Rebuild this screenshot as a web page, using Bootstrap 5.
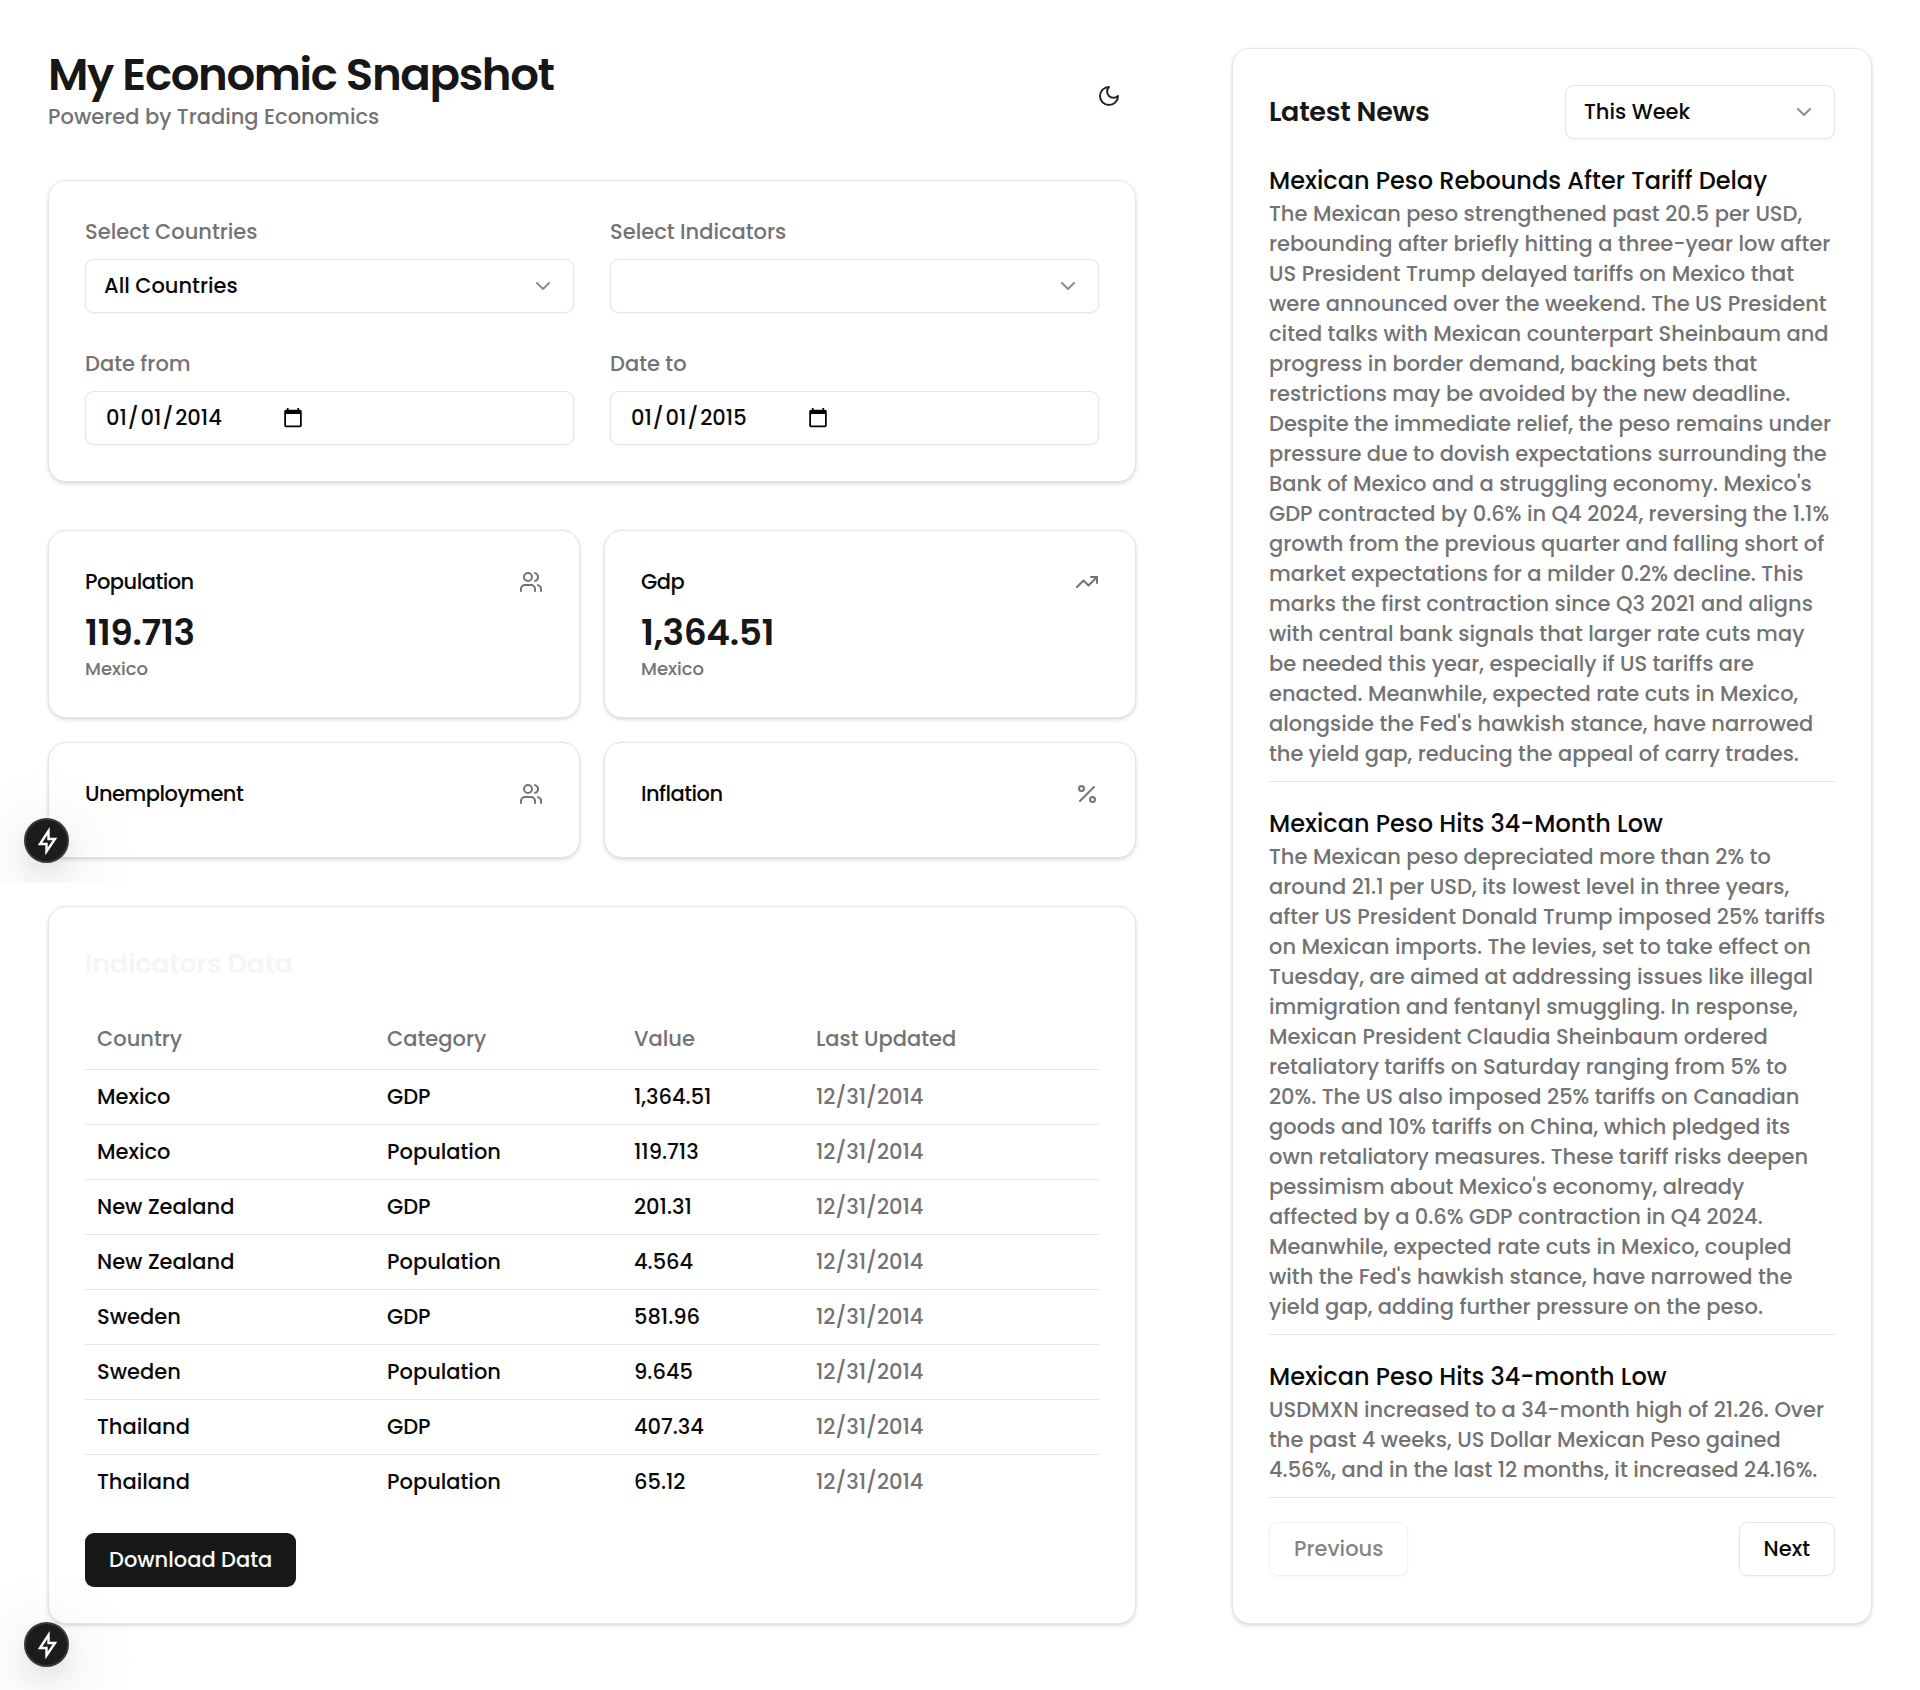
<!DOCTYPE html>
<html lang="en">
<head>
<meta charset="utf-8">
<meta name="viewport" content="width=device-width, initial-scale=1">
<title>My Economic Snapshot</title>
<link href="https://cdn.jsdelivr.net/npm/bootstrap@5.3.0/dist/css/bootstrap.min.css" rel="stylesheet">
<style>
  :root { --line: #e5e5e5; --muted: #737373; --ink: #171717; }
  body { font-family: Poppins, Inter, "Liberation Sans", sans-serif; font-size: 21px; line-height: 30px; font-weight: 500; color: #0a0a0a; background: #fff; }
  h1, h2, h3, p { margin: 0; }
  .page-pad { padding: 48px; }
  .news-col { flex: 0 0 auto; width: calc(33.333vw + 96px); }
  .page-title { font-size: 45px; line-height: 54px; font-weight: 600; color: var(--ink); letter-spacing: -.03em; }
  .page-head { margin-bottom: 36px; }
  .page-head > div { padding-bottom: 12px; }
  .soft { color: var(--muted); }
  .panel { --bs-card-border-color: var(--line); --bs-card-border-radius: 18px;
    --bs-card-color: #0a0a0a; box-shadow: 0 2px 4px rgba(0,0,0,.1), 0 1px 3px rgba(0,0,0,.06); padding: 36px; }
  .fields { display: grid; grid-template-columns: 1fr 1fr; gap: 36px; }
  .fields label { display: block; margin-bottom: 12px; color: var(--muted); }
  .field { height: 54px; padding: 0 18px; font-size: 21px; line-height: 30px; font-weight: 500; border-color: var(--line); border-radius: 9px; color: #0a0a0a; box-shadow: 0 1px 3px rgba(0,0,0,.05); }
  select.field { background-image: none; }
  .picker { position: relative; }
  .picker svg { position: absolute; right: 19px; top: 15px; pointer-events: none; opacity: .8; }
  .news-pick { width: 270px; }
  input.field { display: flex; align-items: center; padding: 0 20px; }
  input.field::-webkit-datetime-edit { flex: none; width: 166px; padding: 0; }
  input.field::-webkit-datetime-edit-text { padding: 0 2px 0 1px; }
  input.field::-webkit-calendar-picker-indicator { margin: 0; padding: 0; width: 22px; height: 22px; }
  .stats { display: grid; grid-template-columns: 1fr 1fr; gap: 24px; }
  .stat-name { font-size: 21px; line-height: 30px; font-weight: 500; letter-spacing: -.025em; }
  .stat-top { margin-bottom: 12px; }
  .stat-num { font-size: 36px; line-height: 48px; font-weight: 600; color: var(--ink); letter-spacing: -.01em; }
  .stat-place { font-size: 18px; line-height: 24px; color: var(--muted); }
  .section-title { font-size: 27px; line-height: 42px; font-weight: 600; letter-spacing: -.01em; color: var(--ink); }
  .ghost { color: #f5f5f5; }
  .stack { display: flex; flex-direction: column; gap: 48px; }
  .data-table { --bs-table-color: #0a0a0a; --bs-table-bg: transparent; margin: 24px 0; border-color: var(--line); table-layout: fixed; }
  .data-table th, .data-table td { padding: 12px; font-weight: 500; }
  .data-table th { padding: 15px 12px; color: var(--muted); }
  .data-table td:last-child { color: var(--muted); }
  .data-table tbody tr:last-child td { border-bottom: 0; }
  .col-country { width: 290px; }
  .col-category { width: 247px; }
  .col-value { width: 182px; }
  .act { height: 54px; padding: 0 24px; font-size: 21px; line-height: 30px; font-weight: 500; border-radius: 9px; box-shadow: 0 1px 3px rgba(0,0,0,.05);
    --bs-btn-color: #0a0a0a; --bs-btn-border-color: var(--line); --bs-btn-bg: #fff; --bs-btn-disabled-color: #0a0a0a; --bs-btn-disabled-border-color: var(--line); --bs-btn-disabled-opacity: .5; }
  .act-dark { --bs-btn-color: #fafafa; --bs-btn-bg: #171717; border: 0; }
  .icon-btn { width: 54px; height: 54px; padding: 0; display: flex; align-items: center; justify-content: center; }
  .story { padding-bottom: 12px; border-bottom: 1px solid var(--line); margin-bottom: 24px; }
  .story-title { font-size: 24px; line-height: 36px; font-weight: 500; }
  .story p { color: var(--muted); white-space: nowrap; }
  .glyph { fill: none; stroke: currentColor; stroke-width: 2; stroke-linecap: round; stroke-linejoin: round; display: block; }
  .dev-layer { position: absolute; left: 0; width: 240px; height: 240px; overflow: hidden; pointer-events: none; }
  .dev-layer.upper { top: 643px; }
  .dev-layer.lower { bottom: 0; }
  .dev-btn { position: absolute; left: 24px; bottom: 20px; width: 45px; height: 45px; border: 2px solid #3a3a3c; border-radius: 50%; background: #1c1c1e; color: #fff; padding: 0;
    display: flex; align-items: center; justify-content: center; box-shadow: 0 12px 24px rgba(0,0,0,.08), 0 16px 80px rgba(0,0,0,.2); }
  .dev-btn .glyph { stroke-width: 2.4; stroke-linejoin: miter; }
  .lower .dev-btn { bottom: 23px; }
</style>
</head>
<body class="position-relative min-vh-100">
<main class="d-flex">
  <div class="page-pad flex-grow-1">
    <header class="page-head d-flex justify-content-between align-items-center">
      <div>
        <h1 class="page-title">My Economic Snapshot</h1>
        <p class="soft">Powered by Trading Economics</p>
      </div>
      <button type="button" class="btn icon-btn border-0" aria-label="Toggle theme">
        <svg class="glyph" width="24" height="24" viewBox="0 0 24 24"><path d="M12 3a6 6 0 0 0 9 9 9 9 0 1 1-9-9Z"/></svg>
      </button>
    </header>

    <div class="stack">
      <form class="card panel">
        <div class="fields">
          <div>
            <label for="countries">Select Countries</label>
            <div class="picker">
              <select id="countries" class="form-select field"><option>All Countries</option></select>
              <svg class="glyph soft" width="24" height="24" viewBox="0 0 24 24"><path d="m6 9 6 6 6-6"/></svg>
            </div>
          </div>
          <div>
            <label for="indicators">Select Indicators</label>
            <div class="picker">
              <select id="indicators" class="form-select field"><option></option></select>
              <svg class="glyph soft" width="24" height="24" viewBox="0 0 24 24"><path d="m6 9 6 6 6-6"/></svg>
            </div>
          </div>
          <div>
            <label for="from">Date from</label>
            <input id="from" type="date" class="form-control field" value="2014-01-01">
          </div>
          <div>
            <label for="to">Date to</label>
            <input id="to" type="date" class="form-control field" value="2015-01-01">
          </div>
        </div>
      </form>

      <section class="stats">
        <article class="card panel">
          <div class="stat-top d-flex justify-content-between align-items-center">
            <h3 class="stat-name">Population</h3>
            <svg class="glyph soft" width="24" height="24" viewBox="0 0 24 24"><path d="M16 21v-2a4 4 0 0 0-4-4H6a4 4 0 0 0-4 4v2"/><circle cx="9" cy="7" r="4"/><path d="M22 21v-2a4 4 0 0 0-3-3.87"/><path d="M16 3.13a4 4 0 0 1 0 7.75"/></svg>
          </div>
          <div class="stat-num">119.713</div>
          <div class="stat-place">Mexico</div>
        </article>
        <article class="card panel">
          <div class="stat-top d-flex justify-content-between align-items-center">
            <h3 class="stat-name">Gdp</h3>
            <svg class="glyph soft" width="24" height="24" viewBox="0 0 24 24"><path d="m22 7-8.500 8.500-5-5L2 17"/><path d="M16 7h6v6"/></svg>
          </div>
          <div class="stat-num">1,364.51</div>
          <div class="stat-place">Mexico</div>
        </article>
        <article class="card panel">
          <div class="stat-top d-flex justify-content-between align-items-center">
            <h3 class="stat-name">Unemployment</h3>
            <svg class="glyph soft" width="24" height="24" viewBox="0 0 24 24"><path d="M16 21v-2a4 4 0 0 0-4-4H6a4 4 0 0 0-4 4v2"/><circle cx="9" cy="7" r="4"/><path d="M22 21v-2a4 4 0 0 0-3-3.87"/><path d="M16 3.13a4 4 0 0 1 0 7.75"/></svg>
          </div>
        </article>
        <article class="card panel">
          <div class="stat-top d-flex justify-content-between align-items-center">
            <h3 class="stat-name">Inflation</h3>
            <svg class="glyph soft" width="24" height="24" viewBox="0 0 24 24"><path d="M19 5 5 19"/><circle cx="6.500" cy="6.500" r="2.500"/><circle cx="17.500" cy="17.500" r="2.500"/></svg>
          </div>
        </article>
      </section>

      <section class="card panel">
        <h2 class="section-title ghost">Indicators Data</h2>
        <table class="table data-table">
          <colgroup><col class="col-country"><col class="col-category"><col class="col-value"><col></colgroup>
          <thead><tr><th scope="col">Country</th><th scope="col">Category</th><th scope="col">Value</th><th scope="col">Last Updated</th></tr></thead>
          <tbody>
            <tr><td>Mexico</td><td>GDP</td><td>1,364.51</td><td>12/31/2014</td></tr>
            <tr><td>Mexico</td><td>Population</td><td>119.713</td><td>12/31/2014</td></tr>
            <tr><td>New Zealand</td><td>GDP</td><td>201.31</td><td>12/31/2014</td></tr>
            <tr><td>New Zealand</td><td>Population</td><td>4.564</td><td>12/31/2014</td></tr>
            <tr><td>Sweden</td><td>GDP</td><td>581.96</td><td>12/31/2014</td></tr>
            <tr><td>Sweden</td><td>Population</td><td>9.645</td><td>12/31/2014</td></tr>
            <tr><td>Thailand</td><td>GDP</td><td>407.34</td><td>12/31/2014</td></tr>
            <tr><td>Thailand</td><td>Population</td><td>65.12</td><td>12/31/2014</td></tr>
          </tbody>
        </table>
        <div><button type="button" class="btn act act-dark">Download Data</button></div>
      </section>
    </div>
  </div>

  <aside class="page-pad news-col d-flex">
    <section class="card panel flex-grow-1">
      <div class="d-flex justify-content-between align-items-center mb-4">
        <h2 class="section-title">Latest News</h2>
        <div class="picker news-pick">
          <select class="form-select field" aria-label="News period"><option>This Week</option></select>
          <svg class="glyph soft" width="24" height="24" viewBox="0 0 24 24"><path d="m6 9 6 6 6-6"/></svg>
        </div>
      </div>
      <article class="story">
        <h3 class="story-title">Mexican Peso Rebounds After Tariff Delay</h3>
        <p>The Mexican peso strengthened past 20.5 per USD,<br>rebounding after briefly hitting a three-year low after<br>US President Trump delayed tariffs on Mexico that<br>were announced over the weekend. The US President<br>cited talks with Mexican counterpart Sheinbaum and<br>progress in border demand, backing bets that<br>restrictions may be avoided by the new deadline.<br>Despite the immediate relief, the peso remains under<br>pressure due to dovish expectations surrounding the<br>Bank of Mexico and a struggling economy. Mexico's<br>GDP contracted by 0.6% in Q4 2024, reversing the 1.1%<br>growth from the previous quarter and falling short of<br>market expectations for a milder 0.2% decline. This<br>marks the first contraction since Q3 2021 and aligns<br>with central bank signals that larger rate cuts may<br>be needed this year, especially if US tariffs are<br>enacted. Meanwhile, expected rate cuts in Mexico,<br>alongside the Fed's hawkish stance, have narrowed<br>the yield gap, reducing the appeal of carry trades.</p>
      </article>
      <article class="story">
        <h3 class="story-title">Mexican Peso Hits 34-Month Low</h3>
        <p>The Mexican peso depreciated more than 2% to<br>around 21.1 per USD, its lowest level in three years,<br>after US President Donald Trump imposed 25% tariffs<br>on Mexican imports. The levies, set to take effect on<br>Tuesday, are aimed at addressing issues like illegal<br>immigration and fentanyl smuggling. In response,<br>Mexican President Claudia Sheinbaum ordered<br>retaliatory tariffs on Saturday ranging from 5% to<br>20%. The US also imposed 25% tariffs on Canadian<br>goods and 10% tariffs on China, which pledged its<br>own retaliatory measures. These tariff risks deepen<br>pessimism about Mexico's economy, already<br>affected by a 0.6% GDP contraction in Q4 2024.<br>Meanwhile, expected rate cuts in Mexico, coupled<br>with the Fed's hawkish stance, have narrowed the<br>yield gap, adding further pressure on the peso.</p>
      </article>
      <article class="story">
        <h3 class="story-title">Mexican Peso Hits 34-month Low</h3>
        <p>USDMXN increased to a 34-month high of 21.26. Over<br>the past 4 weeks, US Dollar Mexican Peso gained<br>4.56%, and in the last 12 months, it increased 24.16%.</p>
      </article>
      <div class="d-flex justify-content-between">
        <button type="button" class="btn act" disabled>Previous</button>
        <button type="button" class="btn act">Next</button>
      </div>
    </section>
  </aside>
</main>

<div class="dev-layer upper">
  <button type="button" class="dev-btn" aria-label="Developer tools">
    <svg class="glyph" width="28" height="28" viewBox="0 0 28 28"><path d="M15.500 4 7 17h6.500v7.500L22 12h-6.500Z"/></svg>
  </button>
</div>
<div class="dev-layer lower">
  <button type="button" class="dev-btn" aria-label="Developer tools">
    <svg class="glyph" width="28" height="28" viewBox="0 0 28 28"><path d="M15.500 4 7 17h6.500v7.500L22 12h-6.500Z"/></svg>
  </button>
</div>
<script src="https://cdn.jsdelivr.net/npm/bootstrap@5.3.0/dist/js/bootstrap.bundle.min.js"></script>
</body>
</html>
